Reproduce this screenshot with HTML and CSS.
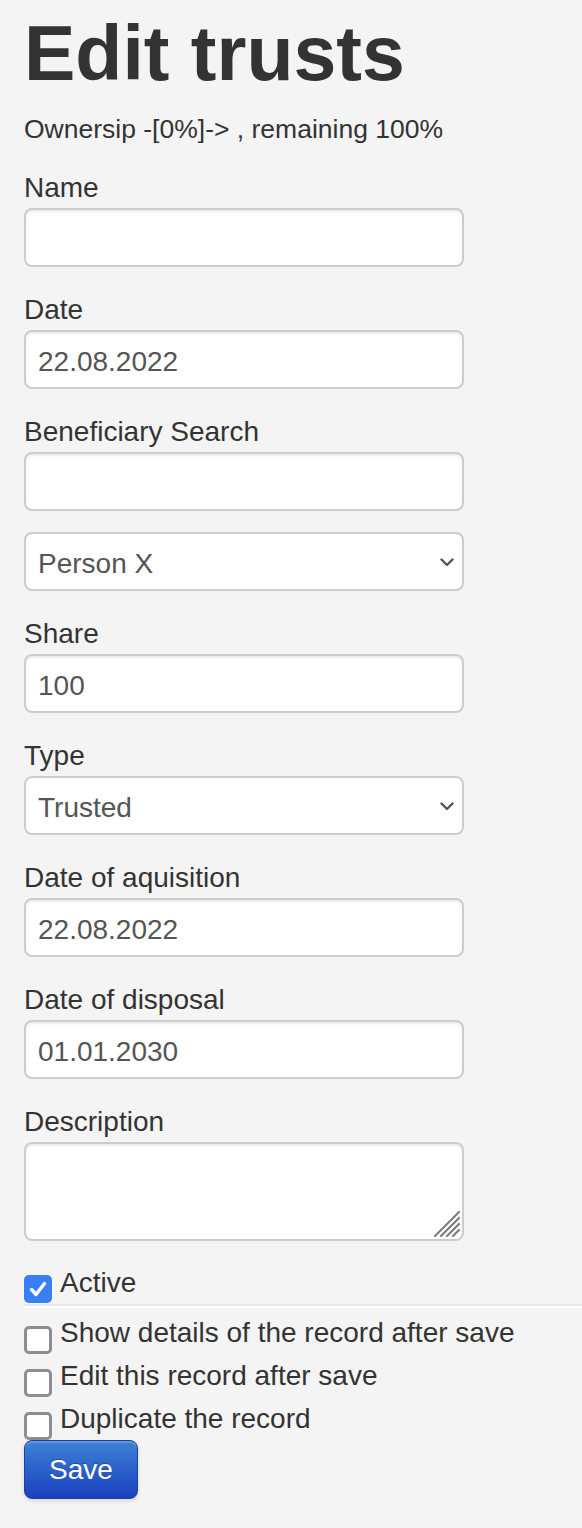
FILE: index.html
```html
<!DOCTYPE html>
<html lang="en">
<head>
<meta charset="utf-8">
<title>Edit trusts</title>
<link rel="stylesheet" href="styles.css">
</head>
<body>
<main class="page">
  <h1 class="title">Edit trusts</h1>
  <p class="summary">Ownersip -[0%]-&gt; , remaining 100%</p>
  <form class="form">
    <label class="field-label" for="f-name">Name</label>
    <input class="field" id="f-name" type="text" value="">

    <label class="field-label" for="f-date">Date</label>
    <input class="field" id="f-date" type="text" value="22.08.2022">

    <label class="field-label" for="f-search">Beneficiary Search</label>
    <input class="field field-tight" id="f-search" type="text" value="">
    <div class="select-wrap">
      <select class="field select" aria-label="Beneficiary"><option>Person X</option></select>
      <svg class="chevron" width="14" height="9" viewBox="0 0 14 9" aria-hidden="true"><path d="M1.5 1.5 L7 7 L12.5 1.5" fill="none" stroke="#555" stroke-width="2.4" stroke-linecap="round" stroke-linejoin="round"/></svg>
    </div>

    <label class="field-label" for="f-share">Share</label>
    <input class="field" id="f-share" type="text" value="100">

    <label class="field-label" for="f-type">Type</label>
    <div class="select-wrap">
      <select class="field select" id="f-type"><option>Trusted</option></select>
      <svg class="chevron" width="14" height="9" viewBox="0 0 14 9" aria-hidden="true"><path d="M1.5 1.5 L7 7 L12.5 1.5" fill="none" stroke="#555" stroke-width="2.4" stroke-linecap="round" stroke-linejoin="round"/></svg>
    </div>

    <label class="field-label" for="f-acq">Date of aquisition</label>
    <input class="field" id="f-acq" type="text" value="22.08.2022">

    <label class="field-label" for="f-disp">Date of disposal</label>
    <input class="field" id="f-disp" type="text" value="01.01.2030">

    <label class="field-label" for="f-desc">Description</label>
    <div class="textarea-wrap">
      <textarea class="field textarea" id="f-desc" rows="2"></textarea>
      <svg class="grip" width="26" height="26" viewBox="0 0 26 26" aria-hidden="true">
        <g stroke="#7a7a7a" stroke-width="2" stroke-linecap="square">
          <line x1="1" y1="25" x2="25" y2="1"/>
          <line x1="7" y1="25" x2="25" y2="7"/>
          <line x1="13" y1="25" x2="25" y2="13"/>
          <line x1="19" y1="25" x2="25" y2="19"/>
        </g>
      </svg>
    </div>

    <div class="check-row check-row-active">
      <span class="box box-checked"><svg width="28" height="28" viewBox="0 0 28 28" aria-hidden="true"><path d="M7.5 14.5 L12 19.5 L20.5 8.5" fill="none" stroke="#fff" stroke-width="3.4" stroke-linecap="round" stroke-linejoin="round"/></svg></span>
      <span class="check-text">Active</span>
    </div>
    <hr class="divider">
    <div class="check-row">
      <span class="box"></span>
      <span class="check-text">Show details of the record after save</span>
    </div>
    <div class="check-row">
      <span class="box"></span>
      <span class="check-text">Edit this record after save</span>
    </div>
    <div class="check-row check-row-last">
      <span class="box"></span>
      <span class="check-text">Duplicate the record</span>
    </div>
    <button class="btn-save" type="button">Save</button>
  </form>
</main>
</body>
</html>
```

FILE: styles.css
```css
html, body {
  margin: 0;
  padding: 0;
  background: #f4f4f4;
}

body {
  font-family: "Liberation Sans", Arial, Helvetica, sans-serif;
  font-size: 28px;
  line-height: 40px;
  color: #333;
  min-height: 1528px;
}

.page {
  padding: 0 0 0 24px;
}

.title {
  margin: 13px 0 15px;
  font-size: 77px;
  line-height: 80px;
  font-weight: bold;
  color: #333;
}

.summary {
  margin: 0 0 20px;
  font-size: 26.5px;
  line-height: 40px;
  padding-top: 1px;
  height: 39px;
}

.form {
  display: flex;
  flex-direction: column;
  align-items: flex-start;
  margin: 0;
}

.field-label {
  display: block;
  line-height: 40px;
  margin: 0;
}

.field {
  box-sizing: border-box;
  width: 440px;
  height: 59px;
  margin: 0 0 23px;
  padding: 4px 12px 0;
  font-family: "Liberation Sans", Arial, Helvetica, sans-serif;
  font-size: 28px;
  color: #555;
  background: #fff;
  border: 2px solid #ccc;
  border-radius: 8px;
  box-shadow: inset 0 2px 2px rgba(0, 0, 0, 0.075);
  outline: none;
}

.field-tight {
  margin-bottom: 21px;
}

.select-wrap {
  position: relative;
  width: 440px;
}

.select {
  display: block;
  -webkit-appearance: none;
  appearance: none;
  box-shadow: none;
  padding: 4px 40px 0 12px;
}

.chevron {
  position: absolute;
  right: 10px;
  top: 26px;
  pointer-events: none;
}

.textarea-wrap {
  position: relative;
  width: 440px;
}

.textarea {
  display: block;
  height: 99px;
  margin-bottom: 22px;
  resize: none;
  padding: 8px 12px;
}

.grip {
  position: absolute;
  right: 4px;
  bottom: 26px;
  pointer-events: none;
}

.check-row {
  display: flex;
  align-items: flex-start;
  gap: 8px;
  height: 40px;
  line-height: 40px;
  margin-bottom: 3px;
}

.check-row-active {
  margin-bottom: 0;
}

.check-row-last {
  margin-bottom: 1px;
}

.box {
  box-sizing: border-box;
  flex: none;
  width: 28px;
  height: 28px;
  margin-top: 13px;
  background: #fff;
  border: 3px solid #8e8d95;
  border-radius: 5px;
}

.box-checked {
  margin-top: 12px;
  background: #3a7ef5;
  border: 0;
  border-radius: 5px;
}

.box-checked svg {
  display: block;
}

.check-text {
  white-space: nowrap;
}

.divider {
  align-self: stretch;
  height: 0;
  margin: 1px 0 5px;
  border: 0;
  border-top: 2px solid #e8e8e8;
  border-bottom: 2px solid #fff;
}

.btn-save {
  box-sizing: border-box;
  height: 59px;
  margin-top: 0;
  padding: 0 24px;
  font-family: "Liberation Sans", Arial, Helvetica, sans-serif;
  font-size: 28px;
  line-height: 57px;
  color: #fff;
  text-shadow: 0 -1px 0 rgba(0, 0, 0, 0.25);
  background: linear-gradient(to bottom, #3d83d3, #1a40c1);
  border: 1px solid #1f3f9e;
  border-radius: 8px;
  box-shadow: inset 0 2px 0 rgba(255, 255, 255, 0.18), 0 2px 4px rgba(0, 0, 0, 0.12);
  cursor: pointer;
}
```
